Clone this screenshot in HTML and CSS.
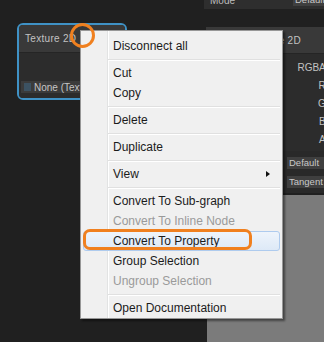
FILE: index.html
```html
<!DOCTYPE html>
<html>
<head>
    <meta charset="UTF-8">
    <title>Shader Graph - context menu</title>
    <link rel="stylesheet" href="styles.css">
</head>
<body>
    <div id="canvas">
        <!-- Node above (only its bottom row is visible) -->
        <div class="node node-top">
            <div class="setting-row">
                <span class="setting-label">Mode</span>
                <span class="dropdown">Default</span>
            </div>
        </div>

        <!-- Texture 2D property node -->
        <div class="node node-texture selected">
            <div class="node-header">Texture 2D</div>
            <div class="node-body">
                <div class="object-field">
                    <span class="object-icon"></span>
                    <span>None (Texture)</span>
                </div>
            </div>
        </div>

        <!-- Sample Texture 2D node -->
        <div class="node node-sample">
            <div class="node-header sample-header">Sample Texture 2D</div>
            <div class="node-body ports">
                <div class="port">RGBA(4)</div>
                <div class="port">R(1)</div>
                <div class="port">G(1)</div>
                <div class="port">B(1)</div>
                <div class="port">A(1)</div>
            </div>
            <div class="settings">
                <span class="setting-label">Type</span>
                <span class="dropdown">Default</span>
                <span class="setting-label">Space</span>
                <span class="dropdown">Tangent</span>
            </div>
            <div class="preview"></div>
        </div>

        <!-- Context menu -->
        <div class="context-menu">
            <div class="menu-item">Disconnect all</div>
            <div class="menu-sep"></div>
            <div class="menu-item">Cut</div>
            <div class="menu-item">Copy</div>
            <div class="menu-sep"></div>
            <div class="menu-item">Delete</div>
            <div class="menu-sep"></div>
            <div class="menu-item">Duplicate</div>
            <div class="menu-sep"></div>
            <div class="menu-item">View <span class="submenu-arrow"></span></div>
            <div class="menu-sep"></div>
            <div class="menu-item">Convert To Sub-graph</div>
            <div class="menu-item disabled">Convert To Inline Node</div>
            <div class="menu-item hover">Convert To Property</div>
            <div class="menu-item">Group Selection</div>
            <div class="menu-item disabled">Ungroup Selection</div>
            <div class="menu-sep"></div>
            <div class="menu-item">Open Documentation</div>
        </div>

        <!-- Annotations -->
        <div class="mark-circle"></div>
        <div class="mark-box"></div>
    </div>
</body>
</html>
```

FILE: styles.css
```css
/* Page */
body {
    margin: 0;
    background-color: #202020;
    font-family: "Liberation Sans", Arial, sans-serif;
}

#canvas {
    position: relative;
    width: 324px;
    height: 342px;
    overflow: hidden;
    background-color: #202020;
}

/* Graph nodes */
.node {
    position: absolute;
    color: #c2c2c2;
    font-size: 10px;
}

.node-header {
    height: 27px;
    line-height: 27px;
    padding-left: 7px;
    background-color: #393939;
    border-bottom: 1px solid #252525;
    box-sizing: border-box;
    letter-spacing: 0.3px;
}

.node-body {
    background-color: #2c2c2c;
}

.setting-label {
    color: #bdbdbd;
}

.dropdown {
    height: 12px;
    line-height: 12px;
    padding-left: 2px;
    background-color: #3f3f3f;
    color: #c8c8c8;
    font-size: 9.5px;
}

/* Top node (cut by the window) */
.node-top {
    left: 204px;
    top: -10px;
    width: 140px;
    height: 19px;
    background-color: #2e2e2e;
}

.node-top .setting-row {
    display: grid;
    grid-template-columns: 89px 1fr;
    align-items: center;
    height: 12px;
    margin-top: 4px;
}

.node-top .setting-label {
    padding-left: 6px;
}

/* Texture 2D node */
.node-texture {
    left: 17px;
    top: 23px;
    width: 110px;
    height: 77px;
    border: 2px solid #3f92c6;
    border-radius: 6px;
    overflow: hidden;
    box-sizing: border-box;
    background-color: #2b2b2b;
}

.node-texture .node-header {
    height: 28px;
    line-height: 27px;
    padding-left: 6px;
}

.node-texture .node-body {
    height: 45px;
    display: flex;
    align-items: flex-end;
    padding-bottom: 5px;
    box-sizing: border-box;
}

.object-field {
    display: flex;
    align-items: center;
    gap: 3px;
    width: 100%;
    height: 12px;
    margin-left: 2px;
    background-color: #3b3b3b;
    font-size: 10px;
    color: #c6c6c6;
}

.object-icon {
    width: 7px;
    height: 8px;
    margin-left: 3px;
    background-color: #3c5262;
}

/* Sample Texture 2D node */
.node-sample {
    left: 206px;
    top: 27px;
    width: 140px;
}

.sample-header {
    padding-left: 0;
    text-indent: 5px;
}

.ports {
    padding: 5px 8px 2px 0;
}

.port {
    height: 18px;
    line-height: 18px;
    text-align: right;
}

.settings {
    display: grid;
    grid-template-columns: 81px 1fr;
    row-gap: 7px;
    align-items: center;
    padding: 6px 0 5px 0;
    background-color: #292929;
}

.settings .setting-label {
    padding-left: 6px;
}

.preview {
    height: 160px;
    margin-top: 2px;
    margin-left: 1px;
    background-color: #7b7b7b;
}

/* Context menu */
.context-menu {
    position: absolute;
    left: 80px;
    top: 30px;
    width: 201px;
    display: flex;
    flex-direction: column;
    padding: 5px 0 0 0;
    background-color: #f0f0f0;
    background-image: linear-gradient(to right, transparent 26px, #e2e3e3 26px, #e2e3e3 27px, #ffffff 27px, #ffffff 28px, transparent 28px);
    border: 1px solid #979797;
    box-shadow: 2px 2px 2px rgba(0, 0, 0, 0.45);
    font-size: 12px;
    color: #1b1b1b;
}

.menu-item {
    display: flex;
    align-items: center;
    height: 20px;
    margin: 0 2px;
    padding-left: 29px;
    border: 1px solid transparent;
    border-radius: 3px;
    box-sizing: border-box;
}

.menu-item.disabled {
    color: #9a9a9a;
}

.menu-item.hover {
    background-image: linear-gradient(#eef4fb, #dde9f7);
    border-color: #aecbee;
}

.submenu-arrow {
    margin-left: auto;
    margin-right: 9px;
    width: 0;
    height: 0;
    border-top: 3.5px solid transparent;
    border-bottom: 3.5px solid transparent;
    border-left: 4px solid #111111;
}

.menu-sep {
    height: 7px;
    margin-left: 27px;
    margin-right: 2px;
    background-image: linear-gradient(transparent 3px, #e0e0e0 3px, #e0e0e0 4px, #ffffff 4px, #ffffff 5px, transparent 5px);
}

/* Orange annotation marks */
.mark-circle {
    position: absolute;
    left: 70px;
    top: 23px;
    width: 25px;
    height: 25px;
    border: 3px solid #f0801f;
    border-radius: 50%;
    box-sizing: border-box;
}

.mark-box {
    position: absolute;
    left: 83px;
    top: 229px;
    width: 169px;
    height: 21px;
    border: 3px solid #f0801f;
    border-radius: 7px;
    box-sizing: border-box;
}
```
